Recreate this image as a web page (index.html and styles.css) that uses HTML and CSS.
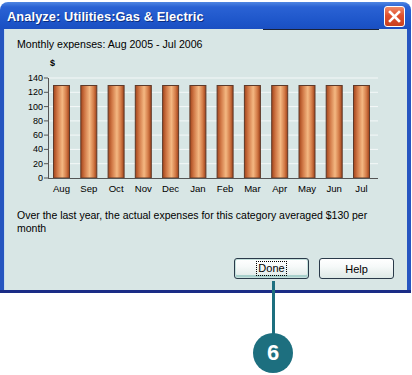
FILE: index.html
```html
<!DOCTYPE html>
<html>
<head>
<meta charset="utf-8">
<link rel="stylesheet" href="styles.css">
</head>
<body>
<div class="stage">
  <div class="window">
    <div class="titlebar">
      <span class="title">Analyze: Utilities:Gas &amp; Electric</span>
      <span class="close">
        <svg width="13" height="13" viewBox="0 0 13 13"><path d="M2 2 L11 11 M11 2 L2 11" stroke="#fff" stroke-width="2.6" stroke-linecap="square"/></svg>
      </span>
    </div>
    <div class="content">
      <div class="topline"></div>
      <p class="caption">Monthly expenses: Aug 2005 - Jul 2006</p>
      <svg class="chart" width="403" height="140" viewBox="0 0 403 140">
        <defs>
          <linearGradient id="bar" x1="0" x2="1" y1="0" y2="0">
            <stop offset="0" stop-color="#a4441a"/>
            <stop offset="0.25" stop-color="#d27a48"/>
            <stop offset="0.55" stop-color="#f4b882"/>
            <stop offset="0.8" stop-color="#d47c48"/>
            <stop offset="1" stop-color="#9e4018"/>
          </linearGradient>
        </defs>
        <text x="46" y="10" class="dollar">$</text>
        <g class="grid">
          <line x1="44" x2="374" y1="22" y2="22"/>
          <line x1="44" x2="374" y1="36.3" y2="36.3"/>
          <line x1="44" x2="374" y1="50.6" y2="50.6"/>
          <line x1="44" x2="374" y1="64.9" y2="64.9"/>
          <line x1="44" x2="374" y1="79.1" y2="79.1"/>
          <line x1="44" x2="374" y1="93.4" y2="93.4"/>
          <line x1="44" x2="374" y1="107.7" y2="107.7"/>
        </g>
        <g class="ticks">
          <line x1="40" x2="44" y1="22" y2="22"/>
          <line x1="40" x2="44" y1="36.3" y2="36.3"/>
          <line x1="40" x2="44" y1="50.6" y2="50.6"/>
          <line x1="40" x2="44" y1="64.9" y2="64.9"/>
          <line x1="40" x2="44" y1="79.1" y2="79.1"/>
          <line x1="40" x2="44" y1="93.4" y2="93.4"/>
          <line x1="40" x2="44" y1="107.7" y2="107.7"/>
          <line x1="40" x2="44" y1="122" y2="122"/>
        </g>
        <g class="ylabels">
          <text x="39" y="25">140</text>
          <text x="39" y="39.3">120</text>
          <text x="39" y="53.6">100</text>
          <text x="39" y="67.9">80</text>
          <text x="39" y="82.1">60</text>
          <text x="39" y="96.4">40</text>
          <text x="39" y="110.7">20</text>
          <text x="39" y="125">0</text>
        </g>
        <g class="bars">
          <rect x="49.5" y="29.5" width="16" height="92.5"/>
          <rect x="76.8" y="29.5" width="16" height="92.5"/>
          <rect x="104.1" y="29.5" width="16" height="92.5"/>
          <rect x="131.3" y="29.5" width="16" height="92.5"/>
          <rect x="158.6" y="29.5" width="16" height="92.5"/>
          <rect x="185.9" y="29.5" width="16" height="92.5"/>
          <rect x="213.1" y="29.5" width="16" height="92.5"/>
          <rect x="240.4" y="29.5" width="16" height="92.5"/>
          <rect x="267.7" y="29.5" width="16" height="92.5"/>
          <rect x="295" y="29.5" width="16" height="92.5"/>
          <rect x="322.2" y="29.5" width="16" height="92.5"/>
          <rect x="349.5" y="29.5" width="16" height="92.5"/>
        </g>
        <line class="axis" x1="44.5" x2="44.5" y1="22" y2="122.5"/>
        <line class="axis" x1="44" x2="374" y1="122.5" y2="122.5"/>
        <g class="xlabels">
          <text x="57.5" y="136">Aug</text>
          <text x="84.8" y="136">Sep</text>
          <text x="112.1" y="136">Oct</text>
          <text x="139.3" y="136">Nov</text>
          <text x="166.6" y="136">Dec</text>
          <text x="193.9" y="136">Jan</text>
          <text x="221.1" y="136">Feb</text>
          <text x="248.4" y="136">Mar</text>
          <text x="275.7" y="136">Apr</text>
          <text x="303" y="136">May</text>
          <text x="330.2" y="136">Jun</text>
          <text x="357.5" y="136">Jul</text>
        </g>
      </svg>
      <p class="summary">Over the last year, the actual expenses for this category averaged $130 per month</p>
      <div class="buttons">
        <button class="btn default"><span class="focus">Done</span></button>
        <button class="btn">Help</button>
      </div>
    </div>
  </div>
  <div class="callout">
    <div class="callout-line"></div>
    <div class="callout-badge">6</div>
  </div>
</div>
</body>
</html>
```
FILE: styles.css
```css
html, body {
  margin: 0;
  padding: 0;
  background: #ffffff;
}
body {
  width: 412px;
  height: 375px;
  overflow: hidden;
  font-family: "Liberation Sans", Arial, sans-serif;
}
.stage {
  position: relative;
  width: 412px;
  height: 375px;
}
.window {
  margin-top: 2px;
  width: 411px;
  height: 291px;
  box-sizing: border-box;
  border-radius: 8px 8px 0 0;
  background: linear-gradient(to bottom, #4f86e2 0px, #2a62d4 5px, #1d55c9 20px, #1a4fc2 27px, #2655c0 28px, #2655c0 100%);
  display: flex;
  flex-direction: column;
  border-bottom: 3px solid #1a2c86;
}
.titlebar {
  height: 27px;
  display: flex;
  align-items: center;
  justify-content: space-between;
  padding: 0 6px 0 7px;
}
.title {
  color: #ffffff;
  font-weight: bold;
  font-size: 12.8px;
  letter-spacing: 0.1px;
  text-shadow: 1px 1px 0 #0a2c80;
  margin-top: 1px;
}
.close {
  width: 19px;
  height: 19px;
  border: 1px solid #ffffff;
  border-radius: 3px;
  background: linear-gradient(to bottom, #f08a68 0%, #e0502e 45%, #c8401e 100%);
  display: flex;
  align-items: center;
  justify-content: center;
  margin-top: 2px;
}
.content {
  position: relative;
  flex: 1;
  margin: 0 4px 0 4px;
  background: #d8e6e5;
  border-left: 1px solid #c6dcec;
  display: flex;
  flex-direction: column;
}
.topline {
  position: absolute;
  left: 258px;
  top: 0;
  width: 116px;
  height: 1px;
  background: #1a2238;
}
.caption {
  margin: 9px 0 0 12px;
  font-size: 10.6px;
  line-height: 13px;
  color: #000;
}
.chart {
  display: block;
  margin-left: -1px;
  margin-top: 5px;
}
.chart .dollar {
  font-family: "Liberation Sans", Arial, sans-serif;
  font-size: 9px;
  font-weight: bold;
  fill: #000;
}
.chart .grid line {
  stroke: #f4f8f8;
  stroke-width: 1;
}
.chart .ticks line, .chart .axis {
  stroke: #555555;
  stroke-width: 1;
}
.chart .ylabels text {
  font-family: "Liberation Sans", Arial, sans-serif;
  font-size: 9px;
  text-anchor: end;
  fill: #000;
}
.chart .xlabels text {
  font-family: "Liberation Sans", Arial, sans-serif;
  font-size: 9.6px;
  text-anchor: middle;
  fill: #000;
}
.chart .bars rect {
  fill: url(#bar);
  stroke: #5e3a2a;
  stroke-width: 1;
}
.summary {
  margin: 13px 0 0 12px;
  width: 372px;
  font-size: 10.5px;
  line-height: 13px;
  color: #000;
}
.buttons {
  display: flex;
  justify-content: flex-end;
  gap: 10px;
  padding: 0 13px 0 0;
  margin-top: 23px;
}
.btn {
  width: 75px;
  height: 21px;
  box-sizing: border-box;
  border: 1px solid #2a3a4a;
  border-radius: 3px;
  background: linear-gradient(to bottom, #ffffff 0%, #f6f9f9 40%, #dde9e6 100%);
  font-family: "Liberation Sans", Arial, sans-serif;
  font-size: 11px;
  color: #000;
  padding: 0;
  display: flex;
  align-items: center;
  justify-content: center;
}
.btn.default {
  box-shadow: inset 0 0 0 1px #c4e0dc, inset 0 -2px 0 1px #a8d0cc;
}
.focus {
  border: 1px dotted #000;
  padding: 1px 1px;
  line-height: 11px;
}
.callout {
  position: absolute;
  left: 252px;
  top: 279px;
  width: 42px;
  display: flex;
  flex-direction: column;
  align-items: center;
}
.callout-line {
  width: 3px;
  height: 53px;
  background: #1d6f7f;
}
.callout-badge {
  width: 40px;
  height: 40px;
  margin-top: -1px;
  border-radius: 50%;
  background: #1d6f7f;
  color: #ffffff;
  font-family: "Liberation Sans", Arial, sans-serif;
  font-weight: bold;
  font-size: 22px;
  display: flex;
  align-items: center;
  justify-content: center;
}
```
